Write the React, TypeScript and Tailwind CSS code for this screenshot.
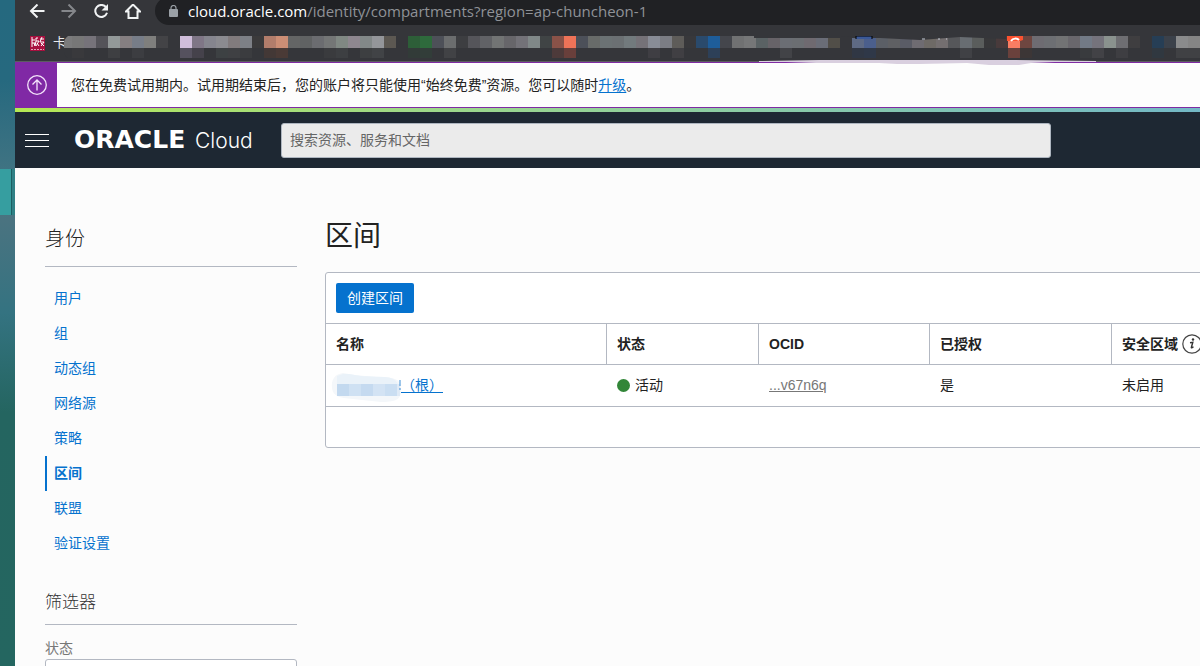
import React from 'react'

const navItems = ['用户', '组', '动态组', '网络源', '策略', '区间', '联盟', '验证设置']

// one entry for each 12px block, left to right
const upperBlocks = [
    '#7b7b7c', '#777777', '#76737a', '#545359', '#939999', '#857f81', '#777d88', '#7f7f7d', '#434346', '#35363a',
    '#d0bedb', '#7f7686', '#85858e', '#8b8b90', '#817b7d', '#7d8086', '#3b3a3b', '#b27d6b', '#cc8e75', '#646565',
    '#606263', '#6b6c70', '#747676', '#808883', '#8e878f', '#828888', '#94969a', '#5c5852', '#35363a', '#2d5e38',
    '#2e6a3c', '#4d5058', '#6b6d6e', '#3d3e41', '#55555a', '#616266', '#727474', '#67666a', '#737278', '#808888',
    '#404445', '#8a5248', '#ef7358', '#4c5059', '#686b69', '#6b7274', '#6b7073', '#727a7d', '#757278', '#888c96',
    '#7b7d84', '#5e5c59', '#38383b', '#2a4a6c', '#1e5d9a', '#44464c', '#707172', '#767778', '#5a6264', '#676368',
    '#6b6e74', '#6b6e72', '#6f6a70', '#6a6d77', '#514e48', '#35363a', '#5e6a84', '#4b5f8c', '#5b5f66', '#5f6063',
    '#5a5c66', '#6f6c72', '#6e6a66', '#746f70', '#56575a', '#686d72', '#5a5d5c', '#38383a', '#483a3b', '#fa7d63',
    '#6e4640', '#6e6c72', '#6d6f73', '#727374', '#69676c', '#727a86', '#75737c', '#8a928e', '#6e6e72', '#3f3e40',
    '#35363a', '#263e55', '#3b414a', '#8a8b8c', '#858585',
]

const lowerBlocks: [number, string][] = [
    [1, '#39393c'], [4, '#3e3f42'], [6, '#3c3d41'], [10, '#55515e'], [11, '#45424b'], [13, '#3d4143'],
    [14, '#3f4043'], [15, '#3b3c3f'], [17, '#433836'], [18, '#4a3a36'], [22, '#3a3b3e'], [23, '#3d3f42'],
    [25, '#3d3f41'], [26, '#414346'], [29, '#323b38'], [30, '#323d39'], [32, '#414245'], [41, '#4d3a3a'],
    [42, '#693f3b'], [49, '#3f3e43'], [51, '#403f43'], [54, '#2d4058'], [60, '#424347'], [66, '#303744'],
    [67, '#2f3848'], [75, '#404145'], [79, '#6a413c'], [80, '#3c3636'], [85, '#393b3e'], [86, '#424246'],
    [88, '#3e3e42'], [91, '#303840'], [93, '#404144'], [94, '#404144'],
]

function BookmarkMosaic() {
    return (
        <svg className="-ml-[3px] mt-[11px] block shrink-0" width="1136" height="25" viewBox="4 0 1136 25" aria-hidden="true">
            <path d="M8 0C2 3 2 20 8 22H1140V0Z" fill="#35363a" />
            <path d="M12 0H8C5 2 4 5 4 7V12H12Z" fill="#7b7b7c" />
            {upperBlocks.slice(1).map((color, i) => (
                <rect key={i} x={(i + 1) * 12} y="0" width="12" height="12" fill={color} />
            ))}
            {lowerBlocks.map(([col, color]) => (
                <rect key={col} x={col * 12} y="12" width="12" height="10" fill={color} />
            ))}
            <path d="M694 0H760L780 0L830 2H694ZM792 0H946V3L900 1L860 4L820 2H792Z" fill="#35363a" />
            <path d="M796 3V0H812V3" fill="#3b5998" stroke="#000" />
            <path d="M947 -1H963V4L960 5H947Z" fill="#fc5230" />
            <path d="M951 5C953 2 957 2 959 4" fill="none" stroke="#fff" strokeWidth="2" />
            <path d="M862 3H865M878 3H880M886 3H887" stroke="#c5cbd5" />
        </svg>
    )
}

function BrowserChrome() {
    return (
        <div className="overflow-hidden border-b border-[#5b5c5f] bg-[#35363a]">
            <div className="flex h-[25px] items-start">
                <div className="flex h-6 shrink-0 items-center gap-4 pl-[14px] text-[#f1f3f4]">
                    <button aria-label="后退" className="h-4 w-4">
                        <svg viewBox="0 0 16 16" fill="none" stroke="currentColor" strokeWidth="2">
                            <path d="M15.500 7H2M8.500 0.500L2 7L8.500 13.500" />
                        </svg>
                    </button>
                    <button aria-label="前进" className="h-4 w-4 text-[#85878b]">
                        <svg viewBox="0 0 16 16" fill="none" stroke="currentColor" strokeWidth="2">
                            <path d="M0.500 7H14M7.500 0.500L14 7L7.500 13.500" />
                        </svg>
                    </button>
                    <button aria-label="刷新" className="h-4 w-4">
                        <svg viewBox="0 0 16 16" fill="none" stroke="currentColor" strokeWidth="2">
                            <path d="M13 3.200A6 6 0 1 0 14 8.800" />
                            <path d="M15 0V6.500H8.500Z" fill="currentColor" stroke="none" />
                        </svg>
                    </button>
                    <button aria-label="主页" className="h-4 w-4">
                        <svg viewBox="0 0 16 16" fill="none" stroke="currentColor" strokeWidth="2">
                            <path d="M8 0.500L1 7.500H3.500V14H12.500V7.500H15Z" />
                        </svg>
                    </button>
                </div>
                <div className="-mt-[3px] ml-[14px] flex h-7 flex-1 items-center gap-[10px] rounded-l-full bg-[#202124] pl-[14px]">
                    <svg className="h-3 w-[9px]" viewBox="0 0 9 12" aria-hidden="true">
                        <rect y="4" width="9" height="8" rx="1" fill="#9aa0a6" />
                        <path d="M2 5V3a2.500 2.500 0 0 1 5 0V5" fill="none" stroke="#9aa0a6" strokeWidth="1.200" />
                    </svg>
                    <span className="font-['Open_Sans','Noto_Sans',sans-serif] text-[15px] leading-5 whitespace-nowrap text-[#8f9297]">
                        <span className="text-white">cloud.oracle.com</span>/identity/compartments?region=ap-chuncheon-1
                    </span>
                </div>
            </div>
            <div className="flex h-9 items-start pl-[15px]">
                <svg className="mt-[11px] h-[15px] w-[15px] shrink-0" viewBox="0 0 15 15" aria-hidden="true">
                    <rect width="15" height="15" fill="#a8103f" />
                    <path
                        d="M2 1V11M2 4H5M2 7H5M4 7L5 10M8 2H6V5L5 10M6 5H9L6 10M7 7L9 10M10 3H14M12 1L10 6H14L11 10M11 7L14 10"
                        fill="none"
                        stroke="#fff"
                    />
                    <path d="M1 13.500H14" stroke="#e0a5b6" strokeDasharray="2 1" />
                </svg>
                <a href="#" className="mt-2 ml-2 w-[14px] shrink-0 text-[13px] leading-5 text-[#e8eaed]">卡</a>
                <BookmarkMosaic />
            </div>
        </div>
    )
}

function TrialBanner() {
    return (
        <div className="relative flex h-[46px] border-y border-[#7f2ba3] bg-[#fdfdfd]">
            <div className="-my-px flex w-[42px] shrink-0 items-center justify-center bg-[#8029a5] pl-0.5">
                <svg className="h-5 w-5" viewBox="0 0 20 20" fill="none" stroke="#f3e3fa" strokeWidth="1.300" aria-hidden="true">
                    <circle cx="10" cy="10" r="9.300" />
                    <path d="M10 15.500V5M5.500 9.500L10 5L14.500 9.500" />
                </svg>
            </div>
            <p className="pl-[14px] text-[14px] leading-[44px] whitespace-nowrap text-[#222]">
                您在免费试用期内。试用期结束后，您的账户将只能使用“始终免费”资源。您可以随时
                <a href="#" className="text-[#0572ce] underline underline-offset-2">升级</a>。
            </p>
            <svg className="absolute -top-[3px] left-[744px]" width="340" height="6" viewBox="0 0 340 6" aria-hidden="true">
                <path d="M0 1L60 0H250L337 1V2H296L272 3L260 5H230L208 3L160 4H138L120 3H57L27 2H0Z" fill="#d9cfdf" />
            </svg>
        </div>
    )
}

function CloudHeader() {
    return (
        <header>
            <div className="h-1 bg-linear-to-r from-[#b5e853] to-[#73b8c6]" />
            <div className="flex h-14 items-center bg-[#1e2833] pl-[10px]">
                <button aria-label="菜单" className="flex h-[13px] w-6 flex-col justify-between">
                    <span className="h-px w-full bg-white" />
                    <span className="h-px w-full bg-white" />
                    <span className="h-px w-full bg-white" />
                </button>
                <a href="#" className="ml-[25px] flex w-[207px] shrink-0 items-baseline gap-[6px] text-white">
                    <span className="w-[115px] font-['DejaVu_Sans',sans-serif] text-[25px] leading-8 font-bold">ORACLE</span>
                    <span className="font-['Inter',sans-serif] text-[21px] leading-8 font-light">Cloud</span>
                </a>
                <input
                    type="text"
                    aria-label="搜索"
                    placeholder="搜索资源、服务和文档"
                    className="h-[35px] w-[770px] rounded-[3px] border border-[#aeb6c0] bg-[#ebebeb] px-2 text-[14px] placeholder:text-[#666]"
                />
            </div>
        </header>
    )
}

function Sidebar() {
    return (
        <aside className="w-[252px] shrink-0 pt-[55px]">
            <h2 className="h-11 border-b border-[#b3b8c2] text-[20px] leading-[32px] font-light text-[#222]">身份</h2>
            <nav className="pt-[14px]">
                {navItems.map((item) => (
                    <a
                        key={item}
                        href="#"
                        className={
                            item === '区间'
                                ? 'block h-[35px] border-l-2 border-[#0572ce] pl-[7px] text-[14px] leading-[34px] font-bold text-[#0572ce]'
                                : 'block h-[35px] border-l-2 border-transparent pl-[7px] text-[14px] leading-[34px] text-[#0572ce]'
                        }
                    >
                        {item}
                    </a>
                ))}
            </nav>
            <h3 className="mt-[26px] h-[38px] border-b border-[#b3b8c2] text-[17px] leading-[31px] font-light text-[#333]">筛选器</h3>
            <label htmlFor="status" className="mt-[13px] block text-[14px] leading-[21px] text-[#777]">
                状态
            </label>
            <select id="status" className="block h-8 w-full appearance-none rounded-[3px] border border-[#b3b8c2] bg-white px-2 text-[14px]">
                <option></option>
            </select>
        </aside>
    )
}

function Compartments() {
    return (
        <main className="min-w-0 flex-1 overflow-hidden pt-[47px] pl-7">
            <h1 className="text-[28px] leading-[44px] text-[#222]">区间</h1>
            <div className="mt-[13px] min-w-[960px] rounded-[3px] border border-[#b3b8c2] bg-white text-[14px] text-[#222]">
                <div className="p-[10px]">
                    <button className="block h-[30px] w-[78px] rounded-[2px] bg-[#0572ce] text-white">创建区间</button>
                </div>
                <table className="w-full table-fixed border-separate border-spacing-0">
                    <thead>
                        <tr className="h-[42px] text-left">
                            <th className="w-[281px] border-y border-r border-[#b3b8c2] px-[10px] py-0">名称</th>
                            <th className="w-[152px] border-y border-r border-[#b3b8c2] px-[10px] py-0">状态</th>
                            <th className="w-[171px] border-y border-r border-[#b3b8c2] px-[10px] py-0">OCID</th>
                            <th className="w-[182px] border-y border-r border-[#b3b8c2] px-[10px] py-0">已授权</th>
                            <th className="border-y border-[#b3b8c2] px-[10px] py-0">
                                <span className="flex items-center gap-1 whitespace-nowrap">
                                    安全区域
                                    <svg className="h-5 w-5" viewBox="0 0 20 20" aria-hidden="true">
                                        <circle cx="10" cy="10" r="9.200" fill="none" stroke="#444" strokeWidth="1.200" />
                                        <circle cx="11" cy="5.500" r="1.200" fill="#333" />
                                        <path d="M8 8.800L10.800 8.300L9.300 13.500Q9.300 14.500 11.500 12.800" fill="none" stroke="#333" strokeWidth="1.400" />
                                    </svg>
                                </span>
                            </th>
                        </tr>
                    </thead>
                    <tbody>
                        <tr className="h-[42px]">
                            <td className="relative border-b border-[#b3b8c2] px-[10px] py-0">
                                <a href="#" className="ml-[65px] text-[#0572ce] underline underline-offset-2">（根）</a>
                                <svg className="absolute top-2 left-[5px]" width="72" height="30" viewBox="0 0 72 30" aria-hidden="true">
                                    <path d="M12 0C3 1 0 8 1 15C2 23 8 25 22 26L50 29C63 29 69 27 70 20V12C68 5 60 4 45 4L24 2Z" fill="#f4f7fa" />
                                    <path d="M6 11V3L12 1L18 1L30 3L54 4Q63 4 67 11Z" fill="#eaf2f9" />
                                    <path d="M6 11H18V23H6Z" fill="#c3d9ef" />
                                    <path d="M18 11H30V23H18Z" fill="#cfe1f3" />
                                    <path d="M30 11H42V23H30Z" fill="#c5daf0" />
                                    <path d="M42 11H54V23H42Z" fill="#d3e3f4" />
                                    <path d="M54 11H66V23H54Z" fill="#cadef2" />
                                    <path d="M66 11H69V23H66Z" fill="#dfeaf6" />
                                    <path d="M69 7V13M69 15V17" stroke="#3d8dd5" />
                                </svg>
                            </td>
                            <td className="border-b border-[#b3b8c2] px-[10px] py-0">
                                <span className="flex items-center gap-[5px]">
                                    <span className="h-[13px] w-[13px] rounded-full bg-[#328638]" />
                                    活动
                                </span>
                            </td>
                            <td className="border-b border-[#b3b8c2] px-[10px] py-0">
                                <a href="#" className="text-[#777] underline">...v67n6q</a>
                            </td>
                            <td className="border-b border-[#b3b8c2] px-[10px] py-0">是</td>
                            <td className="border-b border-[#b3b8c2] px-[10px] py-0">未启用</td>
                        </tr>
                    </tbody>
                </table>
                <div className="h-10" />
            </div>
        </main>
    )
}

export default function App() {
    return (
        <div className="flex h-screen overflow-hidden bg-[#fcfcfc] font-['Liberation_Sans','Noto_Sans_CJK_SC',sans-serif]">
            <div className="w-[15px] shrink-0 bg-[linear-gradient(#25697f,#26697f_12%,#447583_28%,#4a7380_33%,#347381_47%,#246560_62%,#246660)] pt-[169px]">
                <div className="h-[46px] bg-[#2f8085]">
                    <div className="h-full w-3 border-r border-[#1c5f62] bg-[#369ea0]" />
                </div>
            </div>
            <div className="min-w-0 flex-1">
                <BrowserChrome />
                <TrialBanner />
                <CloudHeader />
                <div className="flex pl-[30px]">
                    <Sidebar />
                    <Compartments />
                </div>
            </div>
        </div>
    )
}
